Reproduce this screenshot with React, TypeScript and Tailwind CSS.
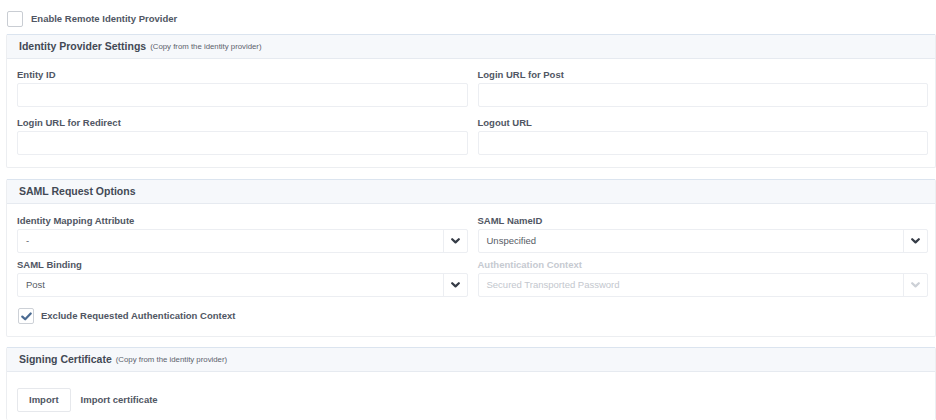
import React from 'react';

const font = { fontFamily: '"Liberation Sans", Arial, sans-serif' };

function Chevron({ disabled }: { disabled?: boolean }) {
    return (
        <svg width="9" height="6" viewBox="0 0 9 6" className={disabled ? 'text-[#ccd0d6]' : 'text-[#353b46]'}>
            <path d="M1.2 1.2 L4.5 4.4 L7.8 1.2" fill="none" stroke="currentColor" strokeWidth="2.2" strokeLinecap="round" strokeLinejoin="round" />
        </svg>
    );
}

function Label({ children, disabled }: { children: React.ReactNode; disabled?: boolean }) {
    return (
        <div className={`h-[12px] leading-[12px] mb-[2px] text-[9.5px] font-bold ${disabled ? 'text-[#c6cad1]' : 'text-[#505663]'}`}>
            {children}
        </div>
    );
}

function TextField({ label, value }: { label: string; value?: string }) {
    return (
        <div className="flex-1">
            <Label>{label}</Label>
            <div className="h-[24px] border border-[#eceef2] rounded-[2px] px-[8px] flex items-center text-[9.5px] text-[#c9ccd2]">
                {value}
            </div>
        </div>
    );
}

function SelectField({ label, value, disabled }: { label: string; value: string; disabled?: boolean }) {
    return (
        <div className="flex-1">
            <Label disabled={disabled}>{label}</Label>
            <div className="h-[24px] border border-[#eceef2] rounded-[2px] flex items-stretch">
                <div className={`flex-1 px-[8px] flex items-center text-[9.5px] ${disabled ? 'text-[#c3c7ce]' : 'text-[#565b65]'}`}>
                    {value}
                </div>
                <div className="w-[24px] border-l border-[#eceef2] flex items-center justify-center">
                    <Chevron disabled={disabled} />
                </div>
            </div>
        </div>
    );
}

function PanelHeader({ title, note }: { title: string; note?: string }) {
    return (
        <div className="h-[25px] bg-[#f6f8fb] border-t border-[#dbe4ef] border-b border-b-[#e6eaf0] px-[12px] flex items-center">
            <span className="text-[10.5px] font-bold text-[#434955]">{title}</span>
            {note && <span className="ml-[4px] text-[7.8px] text-[#5c626c] mt-[1px]">{note}</span>}
        </div>
    );
}

export default function App() {
    return (
        <div className="w-[936px] h-[420px] overflow-hidden bg-white flex flex-col" style={font}>
            {/* Enable toggle */}
            <div className="flex items-center gap-[8px] pl-[7px] pt-[11px]">
                <div className="w-[16px] h-[16px] border border-[#c9cdd3] rounded-[2px] bg-white"></div>
                <span className="text-[9.5px] font-bold text-[#505663]">Enable Remote Identity Provider</span>
            </div>

            {/* Identity Provider Settings */}
            <div className="ml-[6px] mt-[7px] border-x border-b border-[#eceef1] rounded-[2px]">
                <PanelHeader title="Identity Provider Settings" note="(Copy from the identity provider)" />
                <div className="pl-[10px] pr-[7px] pt-[10px] pb-[12px] flex flex-col gap-[10px]">
                    <div className="flex gap-[10px]">
                        <TextField label="Entity ID" value="" />
                        <TextField label="Login URL for Post" value="" />
                    </div>
                    <div className="flex gap-[10px]">
                        <TextField label="Login URL for Redirect" value="" />
                        <TextField label="Logout URL" />
                    </div>
                </div>
            </div>

            {/* SAML Request Options */}
            <div className="ml-[6px] mt-[11px] border-x border-b border-[#eceef1] rounded-[2px]">
                <PanelHeader title="SAML Request Options" />
                <div className="pl-[10px] pr-[7px] pt-[11px] pb-[12px] flex flex-col">
                    <div className="flex gap-[10px]">
                        <SelectField label="Identity Mapping Attribute" value="-" />
                        <SelectField label="SAML NameID" value="Unspecified" />
                    </div>
                    <div className="flex gap-[10px] mt-[6px]">
                        <SelectField label="SAML Binding" value="Post" />
                        <SelectField label="Authentication Context" value="Secured Transported Password" disabled />
                    </div>
                    <div className="flex items-center gap-[7px] mt-[11px] pl-[1px]">
                        <div className="w-[16px] h-[16px] border border-[#cdd1d7] rounded-[2px] flex items-center justify-center">
                            <svg width="11" height="9" viewBox="0 0 11 9">
                                <path d="M1.3 4.6 L4.2 7.3 L9.7 1.5" fill="none" stroke="#4b6b92" strokeWidth="2.2" strokeLinecap="round" strokeLinejoin="round" />
                            </svg>
                        </div>
                        <span className="text-[9.5px] font-bold text-[#505663]">Exclude Requested Authentication Context</span>
                    </div>
                </div>
            </div>

            {/* Signing Certificate */}
            <div className="ml-[6px] mt-[10px] border-x border-[#eceef1] rounded-[2px] flex-1">
                <PanelHeader title="Signing Certificate" note="(Copy from the identity provider)" />
                <div className="pl-[10px] pt-[16px] flex items-center gap-[10px]">
                    <button className="h-[24px] px-[11px] border border-[#e6e8ec] rounded-[2px] bg-white text-[9.5px] font-bold text-[#505663]">
                        Import
                    </button>
                    <span className="text-[9.5px] font-bold text-[#505663]">Import certificate</span>
                </div>
            </div>
        </div>
    );
}
